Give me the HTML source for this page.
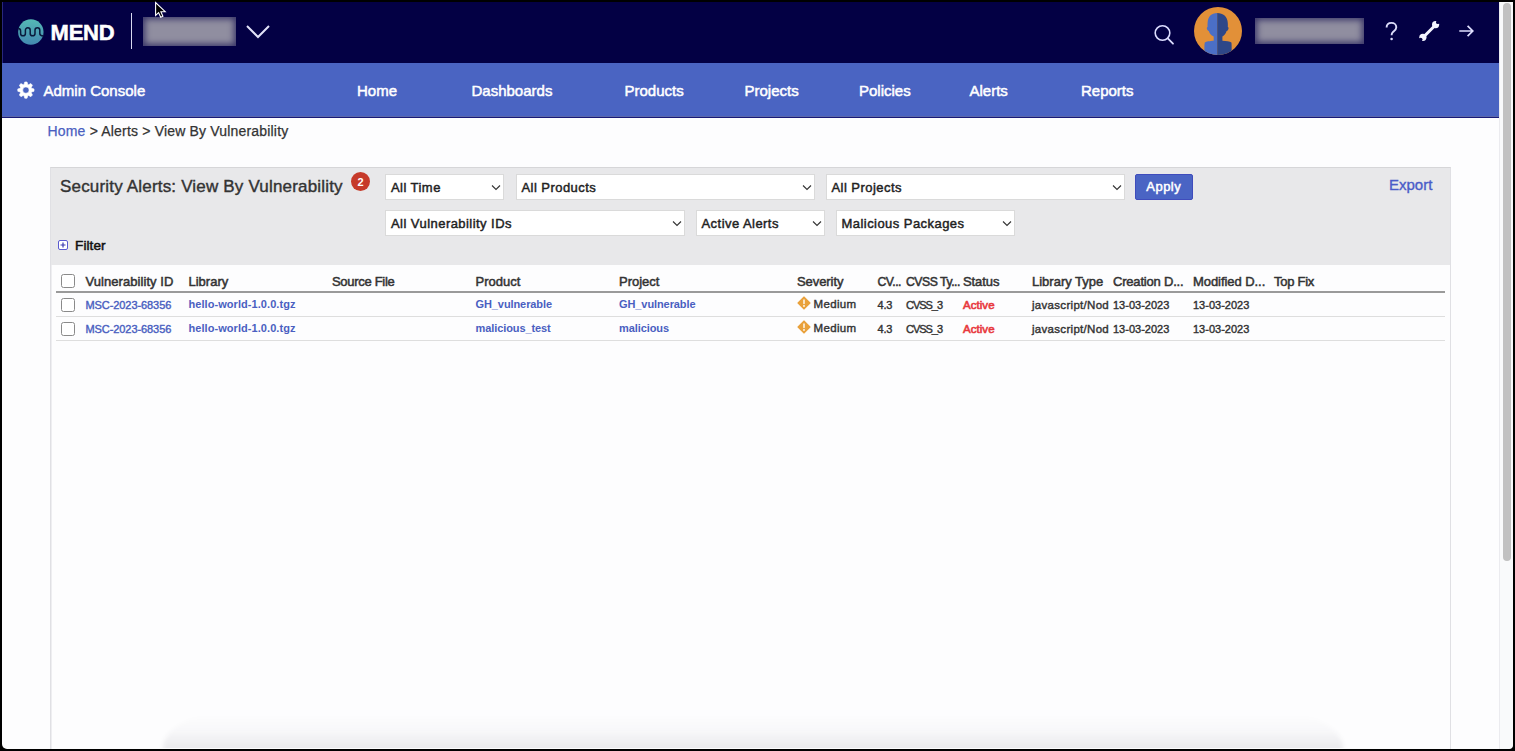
<!DOCTYPE html>
<html><head><meta charset="utf-8">
<style>
*{margin:0;padding:0;box-sizing:border-box}
html,body{width:1515px;height:751px;overflow:hidden;background:#000}
body{position:relative;font-family:"Liberation Sans",sans-serif;color:#333}
.a{position:absolute;white-space:nowrap;line-height:1}
#win{position:absolute;left:2px;top:2px;width:1511px;height:747px;background:#fdfdfe;border-radius:0 0 5px 5px;overflow:hidden}
#hdr{position:absolute;left:2px;top:2px;width:1497px;height:61px;background:#030044}
#nav{position:absolute;left:2px;top:63px;width:1497px;height:55px;background:#4a64c2;border-bottom:1px solid #181a78;box-shadow:inset 0 -1px 0 #5c68aa}
.nv{color:#fff;font-size:15px;-webkit-text-stroke:0.5px #fff;top:82.6px}
#sb{position:absolute;left:1499px;top:2px;width:14px;height:747px;background:#f9fafb;border-left:1px solid #ebebef;border-radius:0 0 4px 0}
#thumb{position:absolute;left:1503px;top:3px;width:8px;height:558px;background:#c1c1c1;border-radius:4px}
#panel{position:absolute;left:50px;top:167px;width:1401px;height:582px;background:#fdfdfe;box-shadow:inset 1px 0 0 #eeeef1;border:1px solid #e0e0e4;border-top-color:#d6d6d8;border-bottom:0}
#pgray{position:absolute;left:51px;top:168px;width:1399px;height:97px;background:#e8e8ea}
.sel{position:absolute;background:#fff;border:1px solid #dadada;height:26px}
.sel span{position:absolute;left:5px;top:6px;font-size:13px;color:#222;-webkit-text-stroke:0.45px #222;letter-spacing:0.45px;line-height:1}
.sel svg{position:absolute;top:9px;right:2px}
.th{font-size:13px;color:#333;-webkit-text-stroke:0.5px #333;top:275px}
.td{font-size:11px;font-weight:bold;color:#333}
.rg{font-weight:normal;-webkit-text-stroke-width:0.4px}
.r1{top:299.1px}.r2{top:323.2px}
.lk{color:#4a5fc1}
.cb{position:absolute;width:14px;height:14px;border:1.5px solid #8a8a8a;border-radius:2.5px;background:#fff}
.hl{position:absolute;left:56px;width:1389px;height:1px;background:#dedede}
</style></head>
<body>
<div id="win"></div>
<div id="hdr"></div>
<div id="nav"></div>
<div id="sb"></div>
<div id="thumb"></div>
<div class="a" style="left:2px;top:2px;width:1px;height:61px;background:#28277e"></div>

<!-- logo -->
<svg class="a" style="left:14px;top:15px" width="34" height="34" viewBox="14 15 34 34">
  <defs><linearGradient id="lg" x1="0" y1="0" x2="0" y2="1"><stop offset="0" stop-color="#55b9b5"/><stop offset="1" stop-color="#4388b0"/></linearGradient></defs>
  <circle cx="30.85" cy="32" r="12.7" fill="url(#lg)"/>
  <path d="M18.2 28.6 Q20.6 28.6 20.6 31 V33.4 A2.4 2.4 0 0 0 25.4 33.4 V30.2 A2.4 2.4 0 0 1 30.2 30.2 V33.4 A2.4 2.4 0 0 0 35 33.4 V30.2 A2.4 2.4 0 0 1 39.8 30.2 V33.6 Q39.8 36 43.4 36" fill="none" stroke="#0a1a3c" stroke-width="1.5"/>
</svg>
<div class="a" style="left:50.5px;top:21.5px;font-size:22px;font-weight:bold;color:#fff;-webkit-text-stroke:0.5px #fff;letter-spacing:-0.2px">MEND</div>
<div class="a" style="left:131px;top:13px;width:1px;height:36px;background:#d8d8f0"></div>
<div class="a" style="left:143px;top:17px;width:93px;height:29px;background:#908ea0;box-shadow:inset 0 0 6px 2px rgba(20,16,80,0.7)"></div>
<svg class="a" style="left:245px;top:24px" width="26" height="16" viewBox="0 0 26 16">
  <path d="M2 2 L13 13 L24 2" fill="none" stroke="#e2e2f8" stroke-width="2"/>
</svg>

<!-- cursor -->
<svg class="a" style="left:153px;top:1px" width="15" height="19" viewBox="153 1 15 19">
  <path d="M155.6 2.6 V15.4 L158.6 12.6 L160.7 17.2 L162.9 16.2 L160.9 11.7 H165.2 Z" fill="#000" stroke="#fff" stroke-width="1.1" stroke-linejoin="miter"/>
</svg>

<!-- right header -->
<svg class="a" style="left:1152px;top:22.5px" width="24" height="24" viewBox="0 0 24 24">
  <circle cx="10.5" cy="10" r="7.3" fill="none" stroke="#dcdcff" stroke-width="1.6"/>
  <path d="M15.8 15.4 L21 20.7" stroke="#dcdcff" stroke-width="1.8" stroke-linecap="round"/>
</svg>
<svg class="a" style="left:1194px;top:7px" width="48" height="48" viewBox="0 0 48 48">
  <defs><clipPath id="cc"><circle cx="24" cy="24" r="24"/></clipPath></defs>
  <circle cx="24" cy="24" r="24" fill="#e29038"/>
  <g clip-path="url(#cc)">
    <path d="M23.2 6 C17.5 6 13.8 9.5 13.6 16 C13.5 18 13.5 19.5 13.6 20 C12.8 20.2 12.5 21.5 13.3 22.8 C13.8 23.6 14.3 24 14.8 24 C15.5 26.5 17 28.5 19.7 29.5 V33.7 C16 34 12 34.3 10.8 35.5 C10.4 37 10.4 40 10.4 48 H23.2 Z" fill="#4b6fc6"/>
    <path d="M23.2 6 C29 6 33.6 9.5 33.8 16 C33.9 18 33.9 19.5 33.8 20 C34.6 20.2 34.9 21.5 34.1 22.8 C33.6 23.6 33.1 24 32.6 24 C31.9 26.5 30.4 28.5 28.4 29.5 V33.7 C32 34 36 34.3 37.4 35.5 C37.7 37 37.7 40 37.7 48 H23.2 Z" fill="#2e4788"/>
  </g>
</svg>
<div class="a" style="left:1255px;top:18px;width:109px;height:26px;background:#908ea0;box-shadow:inset 0 0 6px 2px rgba(20,16,80,0.7)"></div>
<svg class="a" style="left:1382px;top:20px" width="20" height="22" viewBox="0 0 20 22">
  <path d="M4.6 7.6 C4.6 4.5 6.8 2.9 9.5 2.9 C12.3 2.9 14.3 4.7 14.3 7.3 C14.3 9.8 12.5 10.8 11 12 C10 12.8 9.6 13.5 9.6 15.2" fill="none" stroke="#dcdcfa" stroke-width="1.9"/>
  <circle cx="9.6" cy="19" r="1.3" fill="#dcdcfa"/>
</svg>
<svg class="a" style="left:1410px;top:14px" width="34" height="34" viewBox="1410 14 34 34">
  <defs><mask id="wm" maskUnits="userSpaceOnUse" x="1410" y="14" width="34" height="34"><rect x="1410" y="14" width="34" height="34" fill="#fff"/><circle cx="1437.9" cy="22.2" r="1.9" fill="#000"/><circle cx="1420.6" cy="39.6" r="1.9" fill="#000"/></mask></defs>
  <g mask="url(#wm)" fill="#f4f4ff">
    <path d="M1424 36.5 L1434.5 26" stroke="#f4f4ff" stroke-width="3"/>
    <circle cx="1435.6" cy="24.6" r="3.6"/>
    <circle cx="1422.9" cy="37.3" r="3.6"/>
  </g>
</svg>
<svg class="a" style="left:1457px;top:23px" width="18" height="16" viewBox="0 0 18 16">
  <path d="M2.3 8 H15.5 M10.6 2.8 L15.8 8 L10.6 13.2" fill="none" stroke="#e0e0ff" stroke-width="1.7"/>
</svg>

<!-- nav -->
<svg class="a" style="left:14px;top:78px" width="24" height="24" viewBox="14 78 24 24">
  <path fill="#fff" fill-rule="evenodd" stroke="#fff" stroke-width="0.6" stroke-linejoin="round" d="M24.05 84.39 L24.76 81.98 L27.04 81.98 L27.75 84.39 L28.62 84.75 L30.83 83.55 L32.45 85.17 L31.25 87.38 L31.61 88.25 L34.02 88.96 L34.02 91.24 L31.61 91.95 L31.25 92.82 L32.45 95.03 L30.83 96.65 L28.62 95.45 L27.75 95.81 L27.04 98.22 L24.76 98.22 L24.05 95.81 L23.18 95.45 L20.97 96.65 L19.35 95.03 L20.55 92.82 L20.19 91.95 L17.78 91.24 L17.78 88.96 L20.19 88.25 L20.55 87.38 L19.35 85.17 L20.97 83.55 L23.18 84.75 Z M29.099999999999998 90.1 A3.2 3.2 0 1 0 22.7 90.1 A3.2 3.2 0 1 0 29.099999999999998 90.1 Z"/>
</svg>
<div class="a nv" style="left:43.5px">Admin Console</div>
<div class="a nv" style="left:357px">Home</div>
<div class="a nv" style="left:471.5px">Dashboards</div>
<div class="a nv" style="left:624.5px">Products</div>
<div class="a nv" style="left:744.5px">Projects</div>
<div class="a nv" style="left:859px">Policies</div>
<div class="a nv" style="left:969.5px">Alerts</div>
<div class="a nv" style="left:1081px">Reports</div>

<!-- breadcrumb -->
<div class="a" style="left:47.5px;top:124px;font-size:14px;color:#333;letter-spacing:0.18px;-webkit-text-stroke:0.25px #333"><span style="color:#4a5fc1;-webkit-text-stroke:0.25px #4a5fc1">Home</span> &gt; Alerts &gt; View By Vulnerability</div>

<!-- panel -->
<div id="panel"></div>
<div id="pgray"></div>
<div class="a" style="left:60px;top:178px;font-size:17px;color:#333;letter-spacing:0.18px;-webkit-text-stroke:0.4px #333">Security Alerts: View By Vulnerability</div>
<div class="a" style="left:351px;top:171.5px;width:19px;height:19px;border-radius:50%;background:#c63a2a;color:#fff;font-size:11px;font-weight:bold;text-align:center;line-height:20px">2</div>

<div class="sel" style="left:385px;top:174px;width:119px"><span>All Time</span><svg width="10" height="7" viewBox="0 0 10 7"><path d="M1 1.5 L5 5.5 L9 1.5" fill="none" stroke="#333" stroke-width="1.1"/></svg></div>
<div class="sel" style="left:515.5px;top:174px;width:299px"><span>All Products</span><svg width="10" height="7" viewBox="0 0 10 7"><path d="M1 1.5 L5 5.5 L9 1.5" fill="none" stroke="#333" stroke-width="1.1"/></svg></div>
<div class="sel" style="left:825.5px;top:174px;width:299px"><span>All Projects</span><svg width="10" height="7" viewBox="0 0 10 7"><path d="M1 1.5 L5 5.5 L9 1.5" fill="none" stroke="#333" stroke-width="1.1"/></svg></div>
<div class="a" style="left:1135px;top:174px;width:57.5px;height:25.5px;background:#4a64c4;border:1px solid #3f4cbc;border-radius:2px;color:#fff;font-size:13px;-webkit-text-stroke:0.5px #fff;letter-spacing:0.49px;text-align:center;line-height:24px">Apply</div>
<div class="a" style="left:1389px;top:176.5px;font-size:15px;color:#4a5cc8;-webkit-text-stroke:0.35px #4a5cc8">Export</div>

<div class="sel" style="left:385px;top:210px;width:300px"><span>All Vulnerability IDs</span><svg width="10" height="7" viewBox="0 0 10 7"><path d="M1 1.5 L5 5.5 L9 1.5" fill="none" stroke="#333" stroke-width="1.1"/></svg></div>
<div class="sel" style="left:695.5px;top:210px;width:129px"><span>Active Alerts</span><svg width="10" height="7" viewBox="0 0 10 7"><path d="M1 1.5 L5 5.5 L9 1.5" fill="none" stroke="#333" stroke-width="1.1"/></svg></div>
<div class="sel" style="left:835.5px;top:210px;width:179px"><span>Malicious Packages</span><svg width="10" height="7" viewBox="0 0 10 7"><path d="M1 1.5 L5 5.5 L9 1.5" fill="none" stroke="#333" stroke-width="1.1"/></svg></div>

<svg class="a" style="left:58px;top:240px" width="10" height="10" viewBox="0 0 10 10">
  <rect x="0.5" y="0.5" width="9" height="9" rx="1.5" fill="#fff" stroke="#5a5ad0" stroke-width="1"/>
  <path d="M5 2.5 V7.5 M2.5 5 H7.5" stroke="#3a3ab0" stroke-width="1.2"/>
</svg>
<div class="a" style="left:75px;top:239.3px;font-size:13.6px;color:#111;-webkit-text-stroke:0.5px #111;letter-spacing:0.08px">Filter</div>

<!-- table -->
<div class="cb" style="left:61px;top:274px"></div>
<div class="a th" style="left:85.5px;letter-spacing:0.06px">Vulnerability ID</div>
<div class="a th" style="left:188.5px">Library</div>
<div class="a th" style="left:332px;letter-spacing:-0.3px">Source File</div>
<div class="a th" style="left:475.5px">Product</div>
<div class="a th" style="left:619px">Project</div>
<div class="a th" style="left:797px;letter-spacing:-0.07px">Severity</div>
<div class="a th" style="left:877.5px;top:275.8px;font-size:12.2px;letter-spacing:-0.5px">CV...</div>
<div class="a th" style="left:906px;top:275.8px;font-size:12.2px;letter-spacing:-0.45px">CVSS Ty...</div>
<div class="a th" style="left:963px;letter-spacing:-0.08px">Status</div>
<div class="a th" style="left:1032px">Library Type</div>
<div class="a th" style="left:1113px;letter-spacing:-0.2px">Creation D...</div>
<div class="a th" style="left:1193px;letter-spacing:-0.06px">Modified D...</div>
<div class="a th" style="left:1274px;letter-spacing:-0.27px">Top Fix</div>
<div class="hl" style="top:291px;height:2px;background:#9a9a9a"></div>
<div class="cb" style="left:61px;top:298px"></div>
<div class="a td lk rg" style="left:85.5px;top:300.19px;letter-spacing:-0.08px">MSC-2023-68356</div>
<div class="a td lk" style="left:188.5px;top:298.99px;letter-spacing:0.06px">hello-world-1.0.0.tgz</div>
<div class="a td lk" style="left:475.5px;top:299.19px;letter-spacing:-0.09px">GH_vulnerable</div>
<div class="a td lk" style="left:619px;top:298.99px;letter-spacing:-0.09px">GH_vulnerable</div>
<svg class="a" style="left:796.6px;top:296.3px" width="14" height="14" viewBox="0 0 14 14"><path d="M7 1.2 L12.8 7 L7 12.8 L1.2 7 Z" fill="#e9a13b" stroke="#e9a13b" stroke-width="1.6" stroke-linejoin="round"/><path d="M7 3.9 V7.5" stroke="#fff" stroke-width="1.4" stroke-linecap="round"/><circle cx="7" cy="9.9" r="0.95" fill="#fff"/></svg>
<div class="a td rg" style="left:813.5px;top:298.67px;font-size:11.5px;letter-spacing:0.35px">Medium</div>
<div class="a td rg" style="left:877.5px;top:299.89px;letter-spacing:-0.23px">4.3</div>
<div class="a td rg" style="left:906px;top:299.89px;letter-spacing:-1.03px">CVSS_3</div>
<div class="a td rg" style="left:963px;top:299.57px;font-size:11.5px;color:#e8383d;letter-spacing:0.05px;-webkit-text-stroke-width:0.6px">Active</div>
<div class="a td rg" style="left:1032px;top:299.57px;font-size:11.5px;letter-spacing:0.3px">javascript/Nod</div>
<div class="a td rg" style="left:1113px;top:299.99px">13-03-2023</div>
<div class="a td rg" style="left:1193px;top:299.99px">13-03-2023</div>
<div class="hl" style="top:316px"></div>

<div class="cb" style="left:61px;top:322px"></div>
<div class="a td lk rg" style="left:85.5px;top:324.19px;letter-spacing:-0.08px">MSC-2023-68356</div>
<div class="a td lk" style="left:188.5px;top:322.99px;letter-spacing:0.06px">hello-world-1.0.0.tgz</div>
<div class="a td lk" style="left:475.5px;top:323.19px;letter-spacing:-0.09px">malicious_test</div>
<div class="a td lk" style="left:619px;top:322.99px;letter-spacing:-0.09px">malicious</div>
<svg class="a" style="left:796.6px;top:320.3px" width="14" height="14" viewBox="0 0 14 14"><path d="M7 1.2 L12.8 7 L7 12.8 L1.2 7 Z" fill="#e9a13b" stroke="#e9a13b" stroke-width="1.6" stroke-linejoin="round"/><path d="M7 3.9 V7.5" stroke="#fff" stroke-width="1.4" stroke-linecap="round"/><circle cx="7" cy="9.9" r="0.95" fill="#fff"/></svg>
<div class="a td rg" style="left:813.5px;top:322.67px;font-size:11.5px;letter-spacing:0.35px">Medium</div>
<div class="a td rg" style="left:877.5px;top:323.89px;letter-spacing:-0.23px">4.3</div>
<div class="a td rg" style="left:906px;top:323.89px;letter-spacing:-1.03px">CVSS_3</div>
<div class="a td rg" style="left:963px;top:323.57px;font-size:11.5px;color:#e8383d;letter-spacing:0.05px;-webkit-text-stroke-width:0.6px">Active</div>
<div class="a td rg" style="left:1032px;top:323.57px;font-size:11.5px;letter-spacing:0.3px">javascript/Nod</div>
<div class="a td rg" style="left:1113px;top:323.99px">13-03-2023</div>
<div class="a td rg" style="left:1193px;top:323.99px">13-03-2023</div>
<div class="hl" style="top:340px"></div>

<!-- bottom shadow -->
<div class="a" style="left:2px;top:2px;width:1497px;height:746px;overflow:hidden">
  <div class="a" style="left:161px;top:712px;width:1180px;height:40px;border-radius:60px 60px 0 0 / 34px 34px 0 0;background:linear-gradient(to bottom, rgba(30,30,50,0) 0%, rgba(30,30,50,0.02) 40%, rgba(30,30,50,0.1) 100%);filter:blur(2px)"></div>
</div>
</body></html>
